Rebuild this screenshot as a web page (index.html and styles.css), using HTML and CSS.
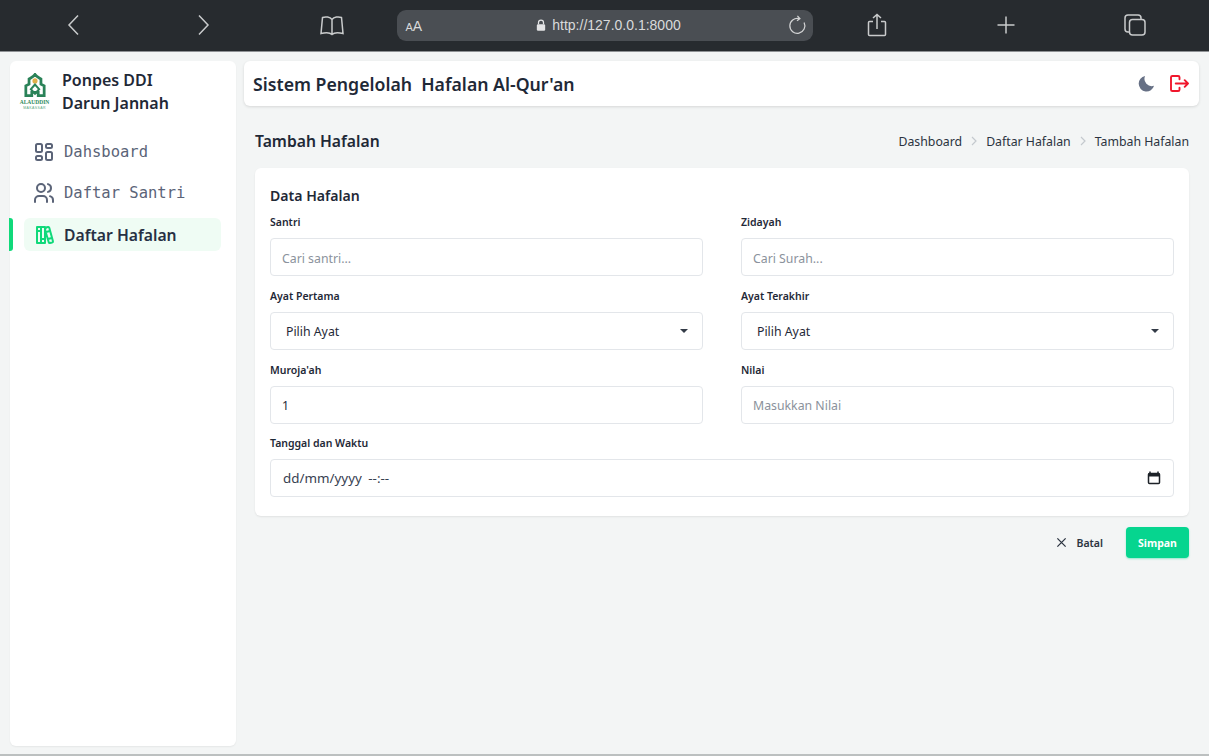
FILE: index.html
```html
<!DOCTYPE html>
<html lang="id">
<head>
<meta charset="utf-8">
<title>Tambah Hafalan</title>
<link rel="stylesheet" href="styles.css">
</head>
<body>
<div class="browser-bar">
  <svg class="tool" viewBox="0 0 24 24"><path d="M16 2.500 7 12l9 9.500"/></svg>
  <svg class="tool" viewBox="0 0 24 24"><path d="M8 2.500 17 12l-9 9.500"/></svg>
  <svg class="tool" viewBox="0 0 24 24"><path d="M12 6.500C10 3.800 5.500 3.500 2.500 4.500L1 20.500C5 19.500 10 19.500 12 21.500 14 19.500 19 19.500 23 20.500L21.500 4.500C18.500 3.500 14 3.800 12 6.500ZM12 6.500V21.500"/></svg>
  <div class="address">
    <span class="aa"><small>A</small>A</span>
    <span class="url">
      <svg class="lock" viewBox="0 0 12 14"><path d="M3 6V4a3 3 0 0 1 6 0v2" class="shackle"/><rect x="1" y="6" width="10" height="8" rx="1.500"/></svg>
      http://127.0.0.1:8000
    </span>
    <svg class="reload" viewBox="0 0 24 24"><path d="M14.500 4.200A9 9 0 1 0 20.500 9M12.500 1l3 3.300-3.500 2.700"/></svg>
  </div>
  <svg class="tool" viewBox="0 0 24 24"><path d="M8 8.500H4.500a1 1 0 0 0-1 1v12a1 1 0 0 0 1 1h15a1 1 0 0 0 1-1v-12a1 1 0 0 0-1-1H16M12 16V1.500M8 5l4-3.500L16 5"/></svg>
  <svg class="tool" viewBox="0 0 24 24"><path d="M12 3.500v17M3.500 12h17"/></svg>
  <svg class="tool" viewBox="0 0 24 24"><path d="M6.500 19H5a3 3 0 0 1-3-3V5a3 3 0 0 1 3-3h10a3 3 0 0 1 3 3v1.500"/><rect x="6.500" y="6.500" width="15.500" height="15.500" rx="3"/></svg>
</div>

<div class="app">
  <aside class="sidebar">
    <div class="brand">
      <div class="logo">
        <svg viewBox="0 0 24 26"><path class="logo-dark" d="M12 1.500C13.500 4 16 5 18.500 6.500V12L22 14V24.500H15.500V21H8.500V24.500H2V14L5.500 12V6.500C8 5 10.500 4 12 1.500Z"/><circle class="logo-sun" cx="12" cy="8.500" r="2.800"/><path class="logo-line" d="M12 12.500 7.500 17.500 12 22.500 16.500 17.500Z"/></svg>
        <span class="logo-text">ALAUDDIN</span>
        <span class="logo-sub">MAKASSAR</span>
      </div>
      <div class="brand-name">Ponpes DDI<br>Darun Jannah</div>
    </div>
    <nav class="menu">
      <a class="menu-item">
        <svg class="menu-icon" viewBox="0 0 24 24"><rect x="4" y="4" width="6" height="8" rx="1.500"/><rect x="14" y="4" width="6" height="4" rx="1.500"/><rect x="4" y="16" width="6" height="4" rx="1.500"/><rect x="14" y="12" width="6" height="8" rx="1.500"/></svg>
        Dahsboard
      </a>
      <a class="menu-item">
        <svg class="menu-icon" viewBox="0 0 24 24"><circle cx="9" cy="7" r="4"/><path d="M3 21v-2a4 4 0 0 1 4-4h4a4 4 0 0 1 4 4v2M16 3.130a4 4 0 0 1 0 7.750M21 21v-2a4 4 0 0 0-3-3.850"/></svg>
        Daftar Santri
      </a>
      <a class="menu-item active">
        <span class="marker"></span>
        <svg class="menu-icon green" viewBox="0 0 24 24"><path d="M5 4h4v16H5zM9 4h4v16H9zM5 8h4M9 16h4M13.803 4.560l2.184-.53c.562-.135 1.133.19 1.282.732l3.695 13.428a1.020 1.020 0 0 1-.634 1.219l-.133.041-2.184.53c-.562.135-1.133-.19-1.282-.732L13.036 6.820a1.020 1.020 0 0 1 .634-1.219zM14 9l4-1M16 16l3.923-.98"/></svg>
        Daftar Hafalan
      </a>
    </nav>
  </aside>

  <main class="content">
    <header class="topbar">
      <h1>Sistem Pengelolah&nbsp; Hafalan Al-Qur'an</h1>
      <div class="top-actions">
        <svg class="moon" viewBox="0 0 18 18"><path d="M17 11.500A8.300 8.300 0 1 1 7.500 1 7.800 7.800 0 0 0 17 11.500Z"/></svg>
        <svg class="logout" viewBox="0 0 20 18"><path d="M10 4.500V2.500A1.500 1.500 0 0 0 8.500 1H2.500A1.500 1.500 0 0 0 1 2.500v13A1.500 1.500 0 0 0 2.500 17h6a1.500 1.500 0 0 0 1.500-1.500v-2M6 9h13M15.500 5.500 19 9l-3.500 3.500"/></svg>
      </div>
    </header>

    <div class="page">
      <div class="page-head">
        <h2>Tambah Hafalan</h2>
        <ol class="crumbs">
          <li>Dashboard</li>
          <li class="sep"><svg viewBox="0 0 6 10"><path d="M1 1l4 4-4 4"/></svg></li>
          <li>Daftar Hafalan</li>
          <li class="sep"><svg viewBox="0 0 6 10"><path d="M1 1l4 4-4 4"/></svg></li>
          <li>Tambah Hafalan</li>
        </ol>
      </div>

      <form class="card">
        <h3>Data Hafalan</h3>
        <div class="grid">
          <div class="field">
            <label for="santri">Santri</label>
            <input id="santri" class="input" placeholder="Cari santri...">
          </div>
          <div class="field">
            <label for="surah">Zidayah</label>
            <input id="surah" class="input" placeholder="Cari Surah...">
          </div>
          <div class="field">
            <label for="first">Ayat Pertama</label>
            <div class="select-wrap">
              <select id="first" class="input select"><option>Pilih Ayat</option></select>
              <span class="caret"></span>
            </div>
          </div>
          <div class="field">
            <label for="last">Ayat Terakhir</label>
            <div class="select-wrap">
              <select id="last" class="input select"><option>Pilih Ayat</option></select>
              <span class="caret"></span>
            </div>
          </div>
          <div class="field">
            <label for="muroja">Muroja'ah</label>
            <input id="muroja" class="input" value="1">
          </div>
          <div class="field">
            <label for="nilai">Nilai</label>
            <input id="nilai" class="input" placeholder="Masukkan Nilai">
          </div>
          <div class="field wide">
            <label>Tanggal dan Waktu</label>
            <div class="input date">
              <span>dd/mm/yyyy --:--</span>
              <svg class="calendar" viewBox="0 0 14 14"><path d="M3 .5v2.500M11 .5v2.500" class="cal-line"/><rect x="1.500" y="2.500" width="11" height="10" rx="1" class="cal-line"/><rect x="1.500" y="2.500" width="11" height="3" class="cal-top"/></svg>
            </div>
          </div>
        </div>
      </form>

      <div class="actions">
        <button type="button" class="btn-cancel">
          <svg viewBox="0 0 12 12"><path d="M1.500 1.500l9 9M10.500 1.500l-9 9"/></svg>
          Batal
        </button>
        <button type="button" class="btn-save">Simpan</button>
      </div>
    </div>
  </main>
</div>
</body>
</html>
```
FILE: styles.css
```css
* { box-sizing: border-box; }
html, body { height: 100%; }
body {
  margin: 0;
  background: #f3f5f5;
  font-family: "Noto Sans", "Open Sans", sans-serif;
  color: #1f2933;
  overflow: hidden;
}
.browser-bar {
  height: 52px;
  background: #272b2f;
  border-bottom: 1px solid #8f9295;
  display: grid;
  grid-template-columns: 129px 129px 129px 416px 129px 129px 129px;
  padding-left: 9.500px;
  align-items: center;
  justify-items: center;
  padding-bottom: 1px;
}
.tool {
  width: 24px;
  height: 24px;
  fill: none;
  stroke: #c9cbcc;
  stroke-width: 1.500;
}
.address {
  width: 416px;
  height: 31px;
  background: #4a4e53;
  border-radius: 9px;
  display: flex;
  align-items: center;
  justify-content: space-between;
  padding: 0 5px 0 9px;
  color: #d9dadb;
}
.aa { font-size: 14px; font-family: "Liberation Sans", sans-serif; width: 30px; padding-top: 2px; }
.aa small { font-size: 11px; }
.url { display: flex; align-items: center; gap: 6px; font-size: 14px; font-family: "Liberation Sans", Arial, sans-serif; margin-right: 6px; }
.lock { width: 10px; height: 12px; fill: #e3e4e5; }
.lock .shackle { fill: none; stroke: #e3e4e5; stroke-width: 1.500; }
.reload { width: 20px; height: 20px; fill: none; stroke: #d2d3d4; stroke-width: 1.500; }

.app {
  display: flex;
  height: 704px;
  padding: 9px 10px 8px 10px;
  gap: 8px;
  border-bottom: 2px solid #bcc0c0;
}
.sidebar {
  width: 226px;
  background: #fff;
  border-radius: 6px;
  box-shadow: 0 1px 2px rgba(0,0,0,.06);
  padding: 8px 0 0;
  flex: none;
}
.brand { display: flex; gap: 13px; padding-left: 10px; height: 46px; }
.logo { width: 29px; display: flex; flex-direction: column; align-items: center; padding-top: 4px; flex: none; }
.logo svg { width: 22px; height: 24px; flex: none; }
.logo-dark { fill: none; stroke: #2a8258; stroke-width: 3; }
.logo-sun { fill: #e0b04a; }
.logo-line { fill: none; stroke: #2a8258; stroke-width: 2.200; }
.logo-text { font-family: "Liberation Serif", serif; font-size: 5.500px; font-weight: 700; line-height: 7px; margin-top: 2px; color: #2c8a5b; white-space: nowrap; }
.logo-sub { font-family: "Liberation Sans", sans-serif; font-size: 3.500px; line-height: 4px; letter-spacing: .4px; color: #5aa883; white-space: nowrap; }
.brand-name { font-size: 16px; font-weight: 600; line-height: 23px; color: #1f2937; }

.menu { margin-top: 20px; display: flex; flex-direction: column; }
.menu-item {
  position: relative;
  display: flex;
  align-items: center;
  gap: 8px;
  height: 33px;
  margin: 0 15px 8px 14px;
  padding-left: 8px;
  border-radius: 6px;
  font-family: "DejaVu Sans Mono", monospace;
  font-size: 15.500px;
  color: #5b6478;
}
.menu-icon {
  width: 24px;
  height: 24px;
  flex: none;
  fill: none;
  stroke: #5b6478;
  stroke-width: 2;
  stroke-linejoin: round;
  stroke-linecap: round;
}
.menu-icon.green { stroke: #10d97a; }
.menu-item.active {
  margin-top: 1px;
  background: #effcf4;
  font-family: "Noto Sans", sans-serif;
  font-size: 15.700px;
  font-weight: 600;
  color: #273043;
}
.marker {
  position: absolute;
  left: -15px;
  top: 0;
  width: 4px;
  height: 33px;
  background: #10d97a;
  border-radius: 0 3px 3px 0;
}

.content { flex: 1; min-width: 0; display: flex; flex-direction: column; }
.topbar {
  height: 45px;
  background: #fff;
  border-radius: 6px;
  box-shadow: 0 1px 3px rgba(0,0,0,.12);
  display: flex;
  align-items: center;
  justify-content: space-between;
  padding: 0 10px 0 9px;
  flex: none;
}
.topbar h1 { margin: 0; font-size: 17.700px; font-weight: 600; color: #1f2937; }
.top-actions { display: flex; align-items: center; gap: 15px; }
.moon { width: 17px; height: 17px; fill: #667085; }
.logout { width: 19px; height: 17px; fill: none; stroke: #f0172c; stroke-width: 2; stroke-linecap: round; stroke-linejoin: round; }

.page { padding: 0 10px 0 11px; }
.page-head { height: 62px; display: flex; align-items: center; justify-content: space-between; padding-top: 8px; }
.page-head h2 { margin: 0; font-size: 15.700px; font-weight: 600; color: #1f2937; }
.crumbs { list-style: none; margin: 0; padding: 0; display: flex; gap: 9px; font-size: 12.300px; color: #2b3340; align-items: center; }
.crumbs .sep { display: flex; }
.crumbs .sep svg { width: 6px; height: 10px; fill: none; stroke: #c4c9ce; stroke-width: 1.200; }

.card {
  background: #fff;
  border-radius: 6px;
  box-shadow: 0 1px 2px rgba(0,0,0,.08);
  padding: 18px 15px 19px 15px;
  height: 348px;
}
.card h3 { margin: 0 0 9px; font-size: 14.100px; line-height: 20px; font-weight: 600; color: #1f2937; }
.grid { display: grid; grid-template-columns: 1fr 1fr; column-gap: 38px; row-gap: 12.750px; }
.field { display: flex; flex-direction: column; min-width: 0; }
.field.wide { grid-column: 1 / -1; }
.field label { font-size: 10.500px; font-weight: 600; line-height: 14px; margin-bottom: 8px; color: #1f2937; height: 15px; }
.input {
  width: 100%;
  height: 38px;
  background: #fff;
  border: 1px solid #e3e6ea;
  border-radius: 4px;
  padding: 2px 11px 0;
  font: 12.300px "Noto Sans", sans-serif;
  color: #1f2937;
  outline: 0;
}
.input::placeholder { color: #8b929c; opacity: 1; }
.select-wrap { position: relative; }
.select { appearance: none; padding-left: 15px; }
.caret {
  position: absolute;
  right: 15px;
  top: 17px;
  width: 0;
  height: 0;
  border: 4px solid transparent;
  border-top: 4px solid #333b47;
  border-bottom: 0;
}
.date { display: flex; align-items: center; justify-content: space-between; padding: 0 12px; font-size: 13.400px; word-spacing: 3px; color: #374151; }
.calendar { width: 14px; height: 14px; }
.cal-line { fill: none; stroke: #1d2228; stroke-width: 1.500; }
.cal-top { fill: #1d2228; }

.actions { display: flex; justify-content: flex-end; align-items: center; gap: 23px; margin-top: 11px; }
.btn-cancel {
  display: flex;
  align-items: center;
  gap: 10px;
  background: none;
  border: 0;
  padding: 0;
  font: 600 10.500px "Noto Sans", sans-serif;
  color: #2b3340;
}
.btn-cancel svg { width: 11px; height: 11px; fill: none; stroke: #2b3340; stroke-width: 1.400; }
.btn-save {
  width: 63px;
  height: 31px;
  background: #06d58f;
  border: 0;
  border-radius: 4px;
  color: #fff;
  font: 700 10.500px "Noto Sans", sans-serif;
  box-shadow: 0 1px 2px rgba(6,213,143,.4);
}
```
